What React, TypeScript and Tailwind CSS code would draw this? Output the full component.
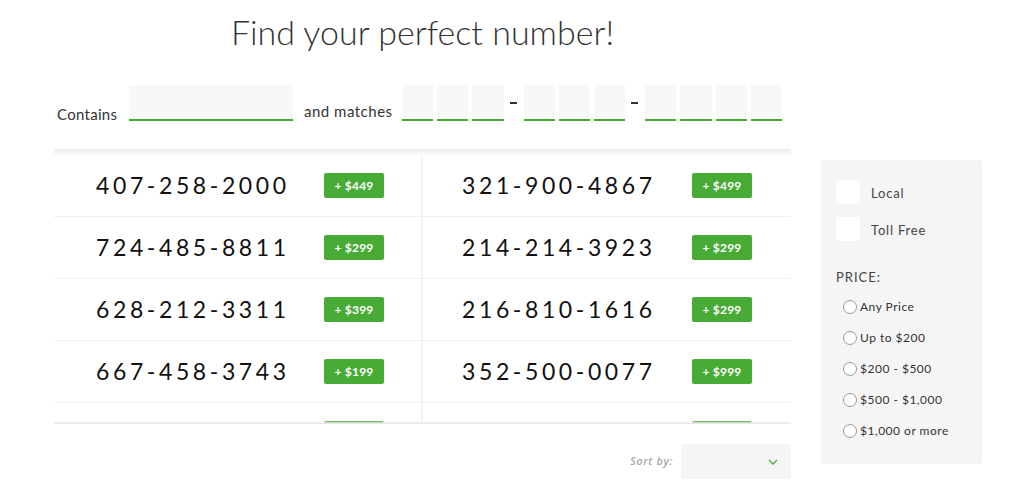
import React from 'react';

const rows = [
  [{ num: '407-258-2000', price: '$449' }, { num: '321-900-4867', price: '$499' }],
  [{ num: '724-485-8811', price: '$299' }, { num: '214-214-3923', price: '$299' }],
  [{ num: '628-212-3311', price: '$399' }, { num: '216-810-1616', price: '$299' }],
  [{ num: '667-458-3743', price: '$199' }, { num: '352-500-0077', price: '$999' }],
  [{ num: '', price: '' }, { num: '', price: '' }],
];

const prices = ['Any Price', 'Up to $200', '$200 - $500', '$500 - $1,000', '$1,000 or more'];

function DigitBox() {
  return <div className="w-[31.2px] h-[36px] bg-[#f8f8f8] border-b-2 border-[#46aa34]" />;
}

function Dash() {
  return <div className="w-[7px] h-[2px] bg-[#333] ml-[2px] mr-[3px]" />;
}

function Badge({ price }: { price: string }) {
  return (
    <div className="w-[60px] h-[25px] bg-[#48ab35] rounded-[2px] flex items-center justify-center text-white text-[12px] font-bold tracking-[0.2px]">
      {price ? `+ ${price}` : ''}
    </div>
  );
}

export default function App() {
  return (
    <div className="w-[1015px] h-[484px] bg-white overflow-hidden flex pl-[54px] gap-[30px]" style={{ fontFamily: 'Lato, "Open Sans", sans-serif' }}>
      <div className="w-[737px] flex flex-col">
        <h1 className="text-center text-[34px] font-light text-[#333] leading-[40px] mt-[12px]">Find your perfect number!</h1>

        <div className="flex items-end mt-[33px] h-[36px]">
          <span className="w-[72px] text-[15px] text-[#333] tracking-[0.3px] ml-[3px] mb-[-4px]">Contains</span>
          <div className="w-[164px] h-[36px] bg-[#f8f8f8] border-b-2 border-[#46aa34]" />
          <span className="w-[109px] pl-[11px] text-[15px] text-[#333] tracking-[0.5px] mb-[-1px]">and matches</span>
          <div className="flex items-center gap-[4px] h-[36px]">
            <DigitBox /><DigitBox /><DigitBox />
            <Dash />
            <DigitBox /><DigitBox /><DigitBox />
            <Dash />
            <DigitBox /><DigitBox /><DigitBox /><DigitBox />
          </div>
        </div>

        <div className="relative mt-[28px] h-[275px] overflow-hidden">
          <div className="absolute top-0 left-0 right-0 h-[7px] bg-gradient-to-b from-[#ececec] to-white z-10" />
          <div className="pt-[6px]">
            {rows.map((row, i) => (
              <div key={i} className="grid grid-cols-[369px_368px] h-[62px] border-b border-[#f0f0f0]">
                {row.map((item, j) => (
                  <div
                    key={j}
                    className={
                      j === 0
                        ? 'flex items-center pl-[42px] border-r-2 border-[#f3f3f3]'
                        : 'flex items-center pl-[39px]'
                    }
                  >
                    <span className={(j === 0 ? 'w-[228px] ' : 'w-[230px] ') + 'text-[23px] text-[#111] tracking-[3.6px]'}>
                      {item.num}
                    </span>
                    <Badge price={item.price} />
                  </div>
                ))}
              </div>
            ))}
          </div>
          <div className="absolute bottom-0 left-0 right-0 h-[3px] bg-gradient-to-b from-white/0 to-[#f0f0f0] border-b border-[#e8e8e8] z-10" />
        </div>

        <div className="flex justify-end items-center mt-[20px]">
          <span className="text-[11px] italic font-semibold text-[#a8a8a8] tracking-[0.6px] mr-[8px]" style={{ fontFamily: '"Open Sans", sans-serif' }}>Sort by:</span>
          <div className="w-[110px] h-[35px] bg-[#f5f5f5] flex items-center justify-end pr-[13px]">
            <svg width="10" height="6" viewBox="0 0 10 6" fill="none">
              <path d="M1 1l4 4 4-4" stroke="#46aa34" strokeWidth="1.3" />
            </svg>
          </div>
        </div>
      </div>

      <div className="w-[161px] h-[304px] mt-[160px] bg-[#f5f5f5] rounded-[3px] px-[15px] pt-[20px]">
        <label className="flex items-center gap-[11px] h-[24px]">
          <span className="w-[24px] h-[24px] bg-white rounded-[3px]" />
          <span className="text-[13px] text-[#444] tracking-[0.8px] mt-[3px]">Local</span>
        </label>
        <label className="flex items-center gap-[11px] h-[24px] mt-[13px]">
          <span className="w-[24px] h-[24px] bg-white rounded-[3px]" />
          <span className="text-[13px] text-[#444] tracking-[0.8px] mt-[3px]">Toll Free</span>
        </label>
        <div className="text-[13px] text-[#444] tracking-[1px] mt-[27px]">PRICE:</div>
        <div className="mt-[4px] pl-[7px] flex flex-col">
          {prices.map((p) => (
            <label key={p} className="flex items-center gap-[3px] h-[31px]">
              <span className="w-[14px] h-[14px] rounded-full border border-[#999] bg-white" />
              <span className="text-[12px] text-[#333] tracking-[0.5px]">{p}</span>
            </label>
          ))}
        </div>
      </div>
    </div>
  );
}
